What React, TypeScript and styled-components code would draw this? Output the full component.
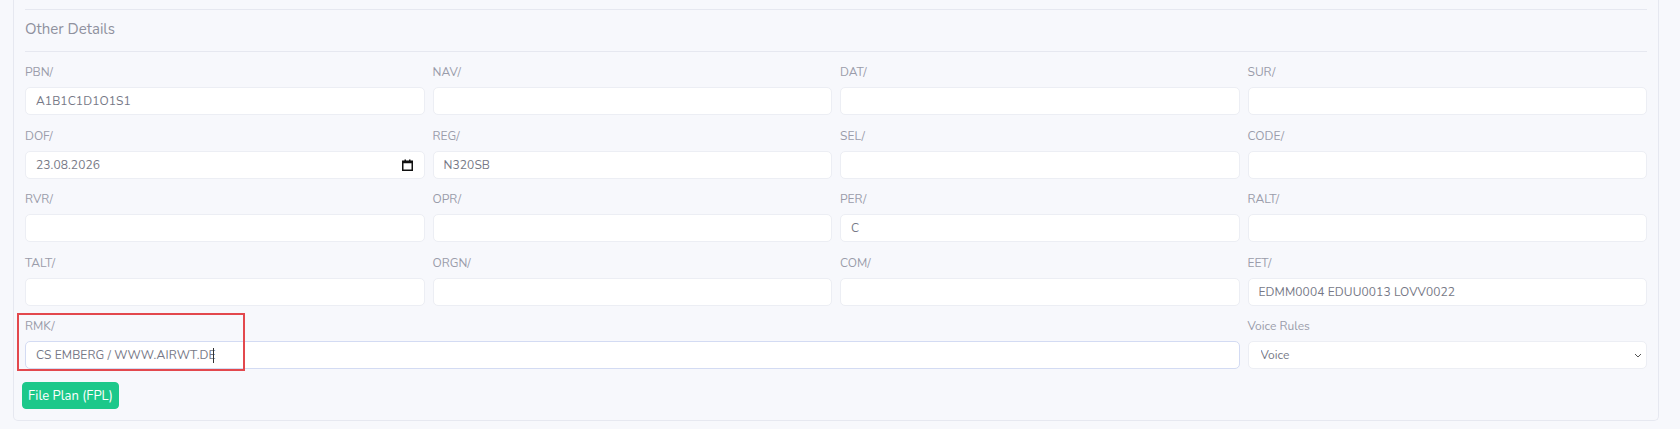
import React from "react";
import styled, { createGlobalStyle } from "styled-components";

const GlobalStyle = createGlobalStyle`
  html, body {
    margin: 0;
    padding: 0;
    background: #f7f8fc;
  }
  body {
    font-family: Nunito, Lato, "Noto Sans", sans-serif;
    color: #858796;
  }
  * {
    box-sizing: border-box;
  }
`;

type Field = {
  label: string;
  value?: string;
  kind?: "date";
};

const FIELDS: Field[] = [
  { label: "PBN/", value: "A1B1C1D1O1S1" },
  { label: "NAV/" },
  { label: "DAT/" },
  { label: "SUR/" },
  { label: "DOF/", value: "23.08.2026", kind: "date" },
  { label: "REG/", value: "N320SB" },
  { label: "SEL/" },
  { label: "CODE/" },
  { label: "RVR/" },
  { label: "OPR/" },
  { label: "PER/", value: "C" },
  { label: "RALT/" },
  { label: "TALT/" },
  { label: "ORGN/" },
  { label: "COM/" },
  { label: "EET/", value: "EDMM0004 EDUU0013 LOVV0022" },
];

function CalendarIcon() {
  return (
    <svg width="11" height="12" viewBox="0 0 11 12" fill="none">
      <rect x="0.75" y="2.25" width="9.5" height="9" stroke="#111" strokeWidth="1.5" />
      <rect x="0.75" y="2.25" width="9.5" height="2" fill="#111" />
      <rect x="2.5" y="0.5" width="1.5" height="2.5" fill="#111" />
      <rect x="7" y="0.5" width="1.5" height="2.5" fill="#111" />
    </svg>
  );
}

export default function App() {
  return (
    <>
      <GlobalStyle />
      <Page>
        <Card>
          <Divider />
          <SectionTitle>Other Details</SectionTitle>
          <Divider />
          <FieldGrid>
            {FIELDS.map((f) => (
              <FieldBox key={f.label}>
                <Label>{f.label}</Label>
                <InputWrap>
                  <TextInput defaultValue={f.value ?? ""} readOnly />
                  {f.kind === "date" && (
                    <InputIcon>
                      <CalendarIcon />
                    </InputIcon>
                  )}
                </InputWrap>
              </FieldBox>
            ))}
            <FieldBox span={3}>
              <Highlight />
              <Label>RMK/</Label>
              <InputWrap>
                <TextInput defaultValue="CS EMBERG / WWW.AIRWT.DE" readOnly focused />
                <Caret />
              </InputWrap>
            </FieldBox>
            <FieldBox>
              <Label>Voice Rules</Label>
              <Select defaultValue="voice">
                <option value="voice">Voice</option>
              </Select>
            </FieldBox>
          </FieldGrid>
          <SubmitButton type="button">File Plan (FPL)</SubmitButton>
        </Card>
      </Page>
    </>
  );
}

const Page = styled.div`
  padding: 0 21px 6px 13px;
`;

const Card = styled.div`
  background: #f7f8fc;
  border: 1px solid #e6e8f0;
  border-top: none;
  border-radius: 0 0 5px 5px;
  padding: 9px 11px 11px 11px;
`;

const Divider = styled.div`
  height: 1px;
  background: #e6e8f0;
`;

const SectionTitle = styled.h2`
  margin: 0;
  padding: 9px 0 12px;
  font-size: 15px;
  line-height: 20px;
  font-weight: 400;
  color: #8f919e;
`;

const FieldGrid = styled.div`
  display: grid;
  grid-template-columns: repeat(4, 1fr);
  column-gap: 8px;
  row-gap: 11.5px;
  margin-top: 11px;
`;

const FieldBox = styled.div<{ span?: number }>`
  position: relative;
  display: flex;
  flex-direction: column;
  grid-column: span ${(p) => p.span ?? 1};
`;

const Label = styled.label`
  font-size: 12px;
  line-height: 18px;
  margin-bottom: 6px;
  color: #9a9caa;
`;

const InputWrap = styled.div`
  position: relative;
`;

const TextInput = styled.input<{ focused?: boolean }>`
  display: block;
  width: 100%;
  height: 28px;
  padding: 0 10px;
  font-family: inherit;
  font-size: 12px;
  letter-spacing: 0.1px;
  color: #767886;
  background: #fff;
  border: 1px solid ${(p) => (p.focused ? "#d3dbf3" : "#eceef4")};
  border-radius: 5px;
  outline: none;
`;

const Caret = styled.span`
  position: absolute;
  left: 188px;
  top: 7px;
  width: 1px;
  height: 15px;
  background: #333;
`;

const InputIcon = styled.span`
  position: absolute;
  right: 12px;
  top: 8px;
  display: flex;
  pointer-events: none;
`;

const Select = styled.select`
  display: block;
  width: 100%;
  height: 28px;
  padding: 0 12px;
  font-family: inherit;
  font-size: 12px;
  color: #767886;
  background: #fff
    url("data:image/svg+xml,%3Csvg xmlns='http://www.w3.org/2000/svg' width='8' height='5' viewBox='0 0 8 5'%3E%3Cpath d='M1 1l3 3 3-3' fill='none' stroke='%23555' stroke-width='1'/%3E%3C/svg%3E")
    no-repeat right 4px center;
  border: 1px solid #eceef4;
  border-radius: 5px;
  appearance: none;
  outline: none;
`;

const Highlight = styled.div`
  position: absolute;
  left: -8px;
  top: -4px;
  width: 228px;
  height: 58px;
  border: 2px solid #e3484d;
  pointer-events: none;
  z-index: 1;
`;

const SubmitButton = styled.button`
  display: block;
  margin: 13px 0 0 -3px;
  height: 27px;
  padding: 0 5px;
  font-family: inherit;
  font-size: 13px;
  color: #fff;
  background: #1cc88a;
  border: 1px solid #1cc88a;
  border-radius: 4px;
`;
